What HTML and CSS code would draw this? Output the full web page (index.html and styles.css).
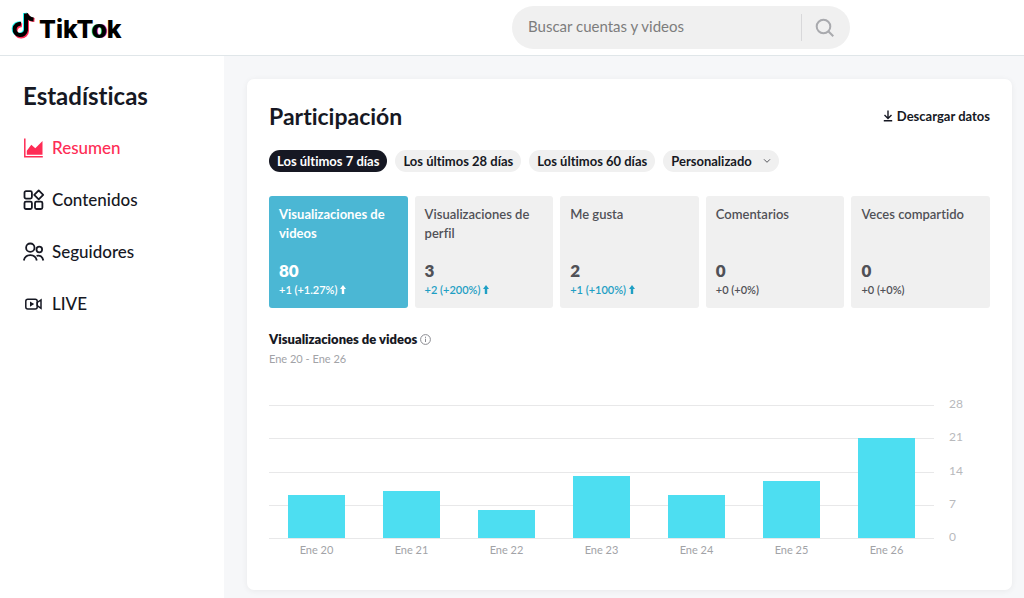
FILE: index.html
```html
<!DOCTYPE html>
<html lang="es">
<head>
<meta charset="utf-8">
<meta name="viewport" content="width=device-width, initial-scale=1">
<title>TikTok - Estadísticas</title>
<link rel="stylesheet" href="styles.css">
</head>
<body>
<header class="topbar">
  <a class="logo" href="#" aria-label="TikTok">
    <svg class="logo-mark" viewBox="0 0 24 28" aria-hidden="true">
      <g fill="none" stroke-width="4">
        <path stroke="#25f4ee" d="M14 2v16.500a5.700 5.700 0 1 1-5-6.300M14 2c.7 3.600 3 5.600 7 6"/>
        <path stroke="#fe2c55" d="M16 3.500v16.500a5.700 5.700 0 1 1-5-5.800M16 3.500c.7 3.600 3 5.300 7.500 5.600"/>
        <path stroke="#000" d="M15 2.500v16.500a5.700 5.700 0 1 1-5-6.300M15 2.500c.7 3.600 3 5.600 7.500 6"/>
      </g>
    </svg>
    <span class="logo-name">TikT<span class="logo-o">o</span>k</span>
  </a>
  <form class="search" role="search">
    <input class="search-input" type="search" placeholder="Buscar cuentas y videos" aria-label="Buscar cuentas y videos">
    <button class="search-button" type="button" aria-label="Buscar">
      <svg width="20" height="20" viewBox="0 0 20 20" fill="none" stroke="#a9aaae" stroke-width="2" aria-hidden="true"><circle cx="8.500" cy="8.500" r="6.800"/><path d="M13.300 13.300l5 5"/></svg>
    </button>
  </form>
</header>
<div class="layout">
  <nav class="sidebar" aria-label="Estadísticas">
    <h1 class="sidebar-title">Estadísticas</h1>
    <a class="nav-link nav-link-active" href="#" aria-current="page">
      <svg class="nav-icon" viewBox="0 0 22 22" aria-hidden="true"><path fill="none" stroke="currentColor" stroke-width="1.500" d="M1.800 1.500v18.200h18"/><path fill="currentColor" d="M3.800 17.700v-4l4.500-6 4 3.500L19.500 4v13.700z"/></svg>
      Resumen
    </a>
    <a class="nav-link" href="#">
      <svg class="nav-icon" viewBox="0 0 22 22" fill="none" stroke="currentColor" stroke-width="1.800" aria-hidden="true"><rect x="1.500" y="2.200" width="7.400" height="7.400" rx="1.500"/><rect x="1.500" y="12.600" width="7.400" height="7.400" rx="1.500"/><rect x="12" y="12.600" width="7.400" height="7.400" rx="1.500"/><path stroke-linejoin="round" d="M15.700 1.400l4.500 4.500-4.500 4.500-4.500-4.500z"/></svg>
      Contenidos
    </a>
    <a class="nav-link" href="#">
      <svg class="nav-icon" viewBox="0 0 22 22" fill="none" stroke="currentColor" stroke-width="1.800" aria-hidden="true"><circle cx="7.300" cy="6.700" r="4.200"/><circle cx="16.300" cy="8.500" r="2.800"/><path d="M.8 19.500c.8-3.600 3.300-5.300 6.500-5.300s5.700 1.700 6.500 5.300M13.600 14.900c3.200-1.100 6 .6 6.700 4.600"/></svg>
      Seguidores
    </a>
    <a class="nav-link" href="#">
      <svg class="nav-icon" viewBox="0 0 22 22" fill="none" stroke="currentColor" stroke-width="1.500" aria-hidden="true"><rect x="2.800" y="6.200" width="11.400" height="9.800" rx="2"/><path d="M14.200 9.500l3.800-2.600v8.400l-3.800-2.600z"/><path fill="currentColor" stroke="none" d="M7 8.500l4.200 2.600L7 13.700z"/></svg>
      LIVE
    </a>
  </nav>
  <main class="main">
    <section class="panel">
      <div class="panel-head">
        <h2 class="panel-title">Participación</h2>
        <button class="download" type="button">
          <svg width="10" height="12" viewBox="0 0 10 12" fill="none" stroke="currentColor" stroke-width="1.400" aria-hidden="true"><path d="M5 .5v7.800M1.500 5L5 8.400 8.500 5M.8 10.800h8.400"/></svg>
          Descargar datos
        </button>
      </div>
      <div class="filters">
        <button class="pill pill-active" type="button" aria-pressed="true">Los últimos 7 días</button>
        <button class="pill" type="button">Los últimos 28 días</button>
        <button class="pill" type="button">Los últimos 60 días</button>
        <div class="range">
          <select class="pill range-select" aria-label="Intervalo de fechas"><option>Personalizado</option></select>
          <svg class="range-arrow" width="8" height="6" viewBox="0 0 8 6" fill="none" stroke="#55565c" aria-hidden="true"><path d="M1 1.300l3 3 3-3"/></svg>
        </div>
      </div>
      <div class="stats">
        <button class="stat stat-active" type="button" aria-pressed="true">
          <span class="stat-label">Visualizaciones de videos</span>
          <span class="stat-value">80</span>
          <span class="stat-delta">+1 (+1.27%) <svg class="up" viewBox="0 0 6 9" aria-hidden="true"><path d="M3 0l3 4H4.200v5H1.800V4H0z"/></svg></span>
        </button>
        <button class="stat" type="button">
          <span class="stat-label">Visualizaciones de perfil</span>
          <span class="stat-value">3</span>
          <span class="stat-delta stat-delta-up">+2 (+200%) <svg class="up" viewBox="0 0 6 9" aria-hidden="true"><path d="M3 0l3 4H4.200v5H1.800V4H0z"/></svg></span>
        </button>
        <button class="stat" type="button">
          <span class="stat-label">Me gusta</span>
          <span class="stat-value">2</span>
          <span class="stat-delta stat-delta-up">+1 (+100%) <svg class="up" viewBox="0 0 6 9" aria-hidden="true"><path d="M3 0l3 4H4.200v5H1.800V4H0z"/></svg></span>
        </button>
        <button class="stat" type="button">
          <span class="stat-label">Comentarios</span>
          <span class="stat-value">0</span>
          <span class="stat-delta">+0 (+0%)</span>
        </button>
        <button class="stat" type="button">
          <span class="stat-label">Veces compartido</span>
          <span class="stat-value">0</span>
          <span class="stat-delta">+0 (+0%)</span>
        </button>
      </div>
      <h3 class="chart-title">Visualizaciones de videos
        <svg width="11" height="11" viewBox="0 0 11 11" fill="none" stroke="#8a8b91" aria-hidden="true"><circle cx="5.500" cy="5.500" r="4.900"/><path d="M5.500 4.700v3.300M5.500 2.700v1.200"/></svg>
      </h3>
      <p class="chart-dates">Ene 20 - Ene 26</p>
      <div class="chart">
        <div class="lines"><i class="line"></i><i class="line"></i><i class="line"></i><i class="line"></i><i class="line"></i></div>
        <div class="bars">
          <div class="bar" style="height:32.14%"></div>
          <div class="bar" style="height:35.71%"></div>
          <div class="bar" style="height:21.43%"></div>
          <div class="bar" style="height:46.43%"></div>
          <div class="bar" style="height:32.14%"></div>
          <div class="bar" style="height:42.86%"></div>
          <div class="bar" style="height:75%"></div>
        </div>
        <div class="scale"><span>28</span><span>21</span><span>14</span><span>7</span><span>0</span></div>
        <div class="days"><span>Ene 20</span><span>Ene 21</span><span>Ene 22</span><span>Ene 23</span><span>Ene 24</span><span>Ene 25</span><span>Ene 26</span></div>
      </div>
    </section>
  </main>
</div>
</body>
</html>
```
FILE: styles.css
```css
* {
  box-sizing: border-box;
}

body {
  margin: 0;
  min-height: 100vh;
  display: flex;
  flex-direction: column;
  background: #f6f7f9;
  color: #161823;
  font-family: Lato, "Open Sans", sans-serif;
  font-size: 13px;
  font-variant-ligatures: none;
}

h1, h2, h3, p {
  margin: 0;
}

a {
  color: inherit;
  text-decoration: none;
}

button, input, select {
  margin: 0;
  border: 0;
  font: inherit;
  font-variant-ligatures: none;
  color: inherit;
}

button {
  padding: 0;
  background: none;
  cursor: pointer;
}

svg {
  flex: none;
}

.topbar {
  display: grid;
  grid-template-columns: 1fr 1fr;
  align-items: center;
  padding: 6px 0;
  background: #fff;
  border-bottom: 1px solid #e0e6e9;
}

.logo {
  display: flex;
  align-items: flex-start;
  gap: 4px;
  padding-left: 11px;
}

.logo-mark {
  width: 24px;
  height: 28px;
}

.logo-name {
  padding-top: 2px;
  color: #000;
  font-family: Inter, Lato, sans-serif;
  font-size: 25px;
  font-weight: 800;
  line-height: 32px;
}

.logo-o {
  text-shadow: -1px 0 #25f4ee, 1px 0 #fe2c55;
}

.search {
  display: flex;
  align-items: center;
  width: 100%;
  max-width: 338px;
  height: 43px;
  border-radius: 22px;
  background: #f0f0f0;
}

.search-input {
  flex: 1;
  min-width: 0;
  padding: 0 16px 3px;
  background: transparent;
  font-size: 15px;
  line-height: 20px;
  outline: 0;
}

.search-input::placeholder {
  color: #7d7d7d;
  opacity: 1;
}

.search-button {
  display: flex;
  align-items: center;
  width: 49px;
  height: 27px;
  padding-left: 13px;
  border-left: 1px solid #d8d8da;
}

.layout {
  flex: 1;
  display: flex;
}

.sidebar {
  flex: none;
  width: 224px;
  padding: 23px 23px;
  background: #fff;
}

.sidebar-title {
  margin-bottom: 19px;
  font-size: 24px;
  font-weight: 700;
  line-height: 34px;
}

.nav-link {
  display: flex;
  align-items: center;
  gap: 7px;
  margin-bottom: 20px;
  font-size: 17px;
  font-weight: 500;
  line-height: 32px;
}

.nav-link-active {
  color: #fe2c55;
}

.nav-icon {
  width: 22px;
  height: 22px;
}

.main {
  flex: 1;
  min-width: 0;
  padding: 23px 12px 8px 23px;
}

.panel {
  padding: 22px 22px 31px;
  border-radius: 7px;
  background: #fff;
  box-shadow: 0 1px 6px rgba(0, 0, 0, 0.06);
}

.panel-head {
  display: flex;
  align-items: center;
  justify-content: space-between;
}

.panel-title {
  font-size: 23px;
  font-weight: 700;
  line-height: 30px;
}

.download {
  display: flex;
  align-items: center;
  gap: 4px;
  font-weight: 700;
}

.filters {
  display: flex;
  align-items: center;
  flex-wrap: wrap;
  gap: 8px;
  margin: 19px 0 24px;
}

.pill {
  padding: 0 8px;
  border-radius: 11px;
  background: #f0f0f0;
  font-weight: 700;
  line-height: 22px;
}

.pill-active {
  background: #161823;
  color: #fff;
}

.range {
  position: relative;
}

.range-select {
  width: 116px;
  height: 22px;
  appearance: none;
}

.range-arrow {
  position: absolute;
  right: 8px;
  top: 8px;
  pointer-events: none;
}

.stats {
  display: grid;
  grid-template-columns: repeat(5, 1fr);
  gap: 7px;
}

.stat {
  display: flex;
  flex-direction: column;
  padding: 9px 10px;
  border-radius: 3px;
  background: #f0f0f0;
  color: #505157;
  text-align: left;
}

.stat-active {
  background: #4bb7d4;
  color: #fff;
}

.stat-label {
  min-height: 56px;
  font-weight: 600;
  line-height: 19px;
}

.stat-active .stat-label {
  font-weight: 700;
}

.stat-value {
  font-size: 17px;
  font-weight: 800;
  line-height: 20px;
}

.stat-delta {
  font-size: 11px;
  font-weight: 600;
  line-height: 18px;
}

.stat-delta-up {
  color: #1f9fc4;
}

.up {
  width: 6px;
  height: 9px;
  fill: currentColor;
}

.chart-title {
  display: flex;
  align-items: center;
  gap: 3px;
  margin-top: 21px;
  font-size: 13px;
  font-weight: 800;
  line-height: 20px;
}

.chart-dates {
  margin-bottom: 36px;
  color: #a2a3a7;
  font-size: 11px;
  line-height: 20px;
}

.chart {
  display: grid;
  grid-template-columns: 1fr 56px;
  grid-template-rows: 134px auto;
}

.lines {
  grid-area: 1 / 1;
  display: flex;
  flex-direction: column;
  justify-content: space-between;
}

.line {
  height: 1px;
  background: #e8e8e9;
}

.bars {
  grid-area: 1 / 1;
  display: grid;
  grid-template-columns: repeat(7, 1fr);
  align-items: end;
  justify-items: center;
  padding-bottom: 1px;
}

.bar {
  width: 60%;
  background: #4ddef1;
}

.scale {
  grid-area: 1 / 2;
  display: flex;
  flex-direction: column;
  justify-content: space-between;
  margin: -9px 0 -6px;
  padding-left: 15px;
  color: #b8b9bc;
  font-size: 12px;
  line-height: 16px;
}

.days {
  grid-area: 2 / 1;
  display: grid;
  grid-template-columns: repeat(7, 1fr);
  padding-top: 2px;
  color: #a2a3a7;
  font-size: 11px;
  line-height: 18px;
  text-align: center;
}
```
